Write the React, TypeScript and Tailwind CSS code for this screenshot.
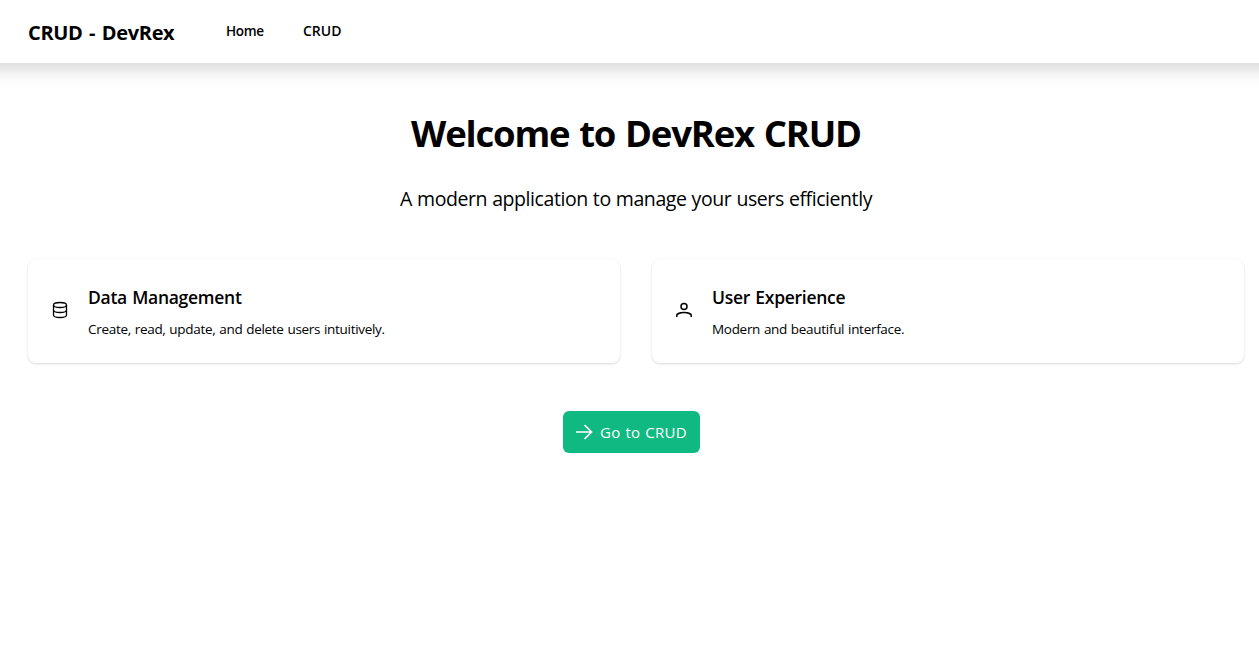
import React from "react";

type CardProps = { icon: React.ReactNode; title: string; text: string; textClass: string };

function DatabaseIcon() {
  return (
    <svg className="h-6 w-6" viewBox="0 0 24 24" fill="none" stroke="currentColor" strokeWidth="1.3">
      <ellipse cx="12" cy="7" rx="6.5" ry="2.5" />
      <path d="M5.5 7v10c0 1.4 2.9 2.5 6.5 2.5s6.5-1.1 6.5-2.5V7M5.5 12c0 1.4 2.9 2.5 6.5 2.5s6.5-1.1 6.5-2.5" />
    </svg>
  );
}

function UserIcon() {
  return (
    <svg className="h-6 w-6" viewBox="0 0 24 24" fill="none" stroke="currentColor" strokeWidth="1.5">
      <circle cx="12" cy="8.5" r="3" />
      <path d="M4.75 19v-1.5c0-1.6 3.2-2.9 7.25-2.9s7.25 1.3 7.25 2.9V19" />
    </svg>
  );
}

function Card({ icon, title, text, textClass }: CardProps) {
  return (
    <section className="flex h-[104px] flex-1 items-center rounded-lg bg-white pl-5 shadow-[0_1px_3px_rgba(0,0,0,0.1),0_1px_2px_rgba(0,0,0,0.06)]">
      <div className="mr-4 shrink-0 pb-0.5">{icon}</div>
      <div className="pt-1">
        <h2 className="flex h-7 items-center"><span className="text-[17.5px] font-semibold tracking-[-0.28px] [word-spacing:1px]">{title}</span></h2>
        <p className="mt-[3px] mb-px flex h-7 items-center pt-[3px]"><span className={textClass}>{text}</span></p>
      </div>
    </section>
  );
}

export default function App() {
  return (
    <div className="min-h-[660px] overflow-hidden bg-white font-['Open_Sans','Noto_Sans',sans-serif] whitespace-nowrap text-black">
      <header className="-mx-8 flex h-[63px] items-start pl-15 shadow-[0_4px_20px_rgba(0,0,0,0.2)]">
        <div className="flex h-16 w-[198px] items-center pt-0.5">
          <span className="text-[20px] font-bold tracking-[-0.35px] [word-spacing:1.8px]">CRUD - DevRex</span>
        </div>
        <nav className="flex h-[61px] items-baseline pt-[21px] text-[14px] leading-5 font-semibold">
          <a href="#" className="w-[77px] text-[13.5px] tracking-[-0.35px]">Home</a>
          <a href="#">CRUD</a>
        </nav>
      </header>
      <main className="pr-[15px] pl-7">
        <h1 className="mt-[45px] flex h-[50px] items-center justify-center text-[36.5px] font-bold tracking-[-1.2px] [word-spacing:1.5px]"><span>Welcome to DevRex CRUD</span></h1>
        <p className="mt-[26px] flex h-[30px] items-center justify-center text-[19.5px] tracking-[-0.43px] [word-spacing:0.5px]"><span>A modern application to manage your users efficiently</span></p>
        <div className="mt-[45px] flex gap-8">
          <Card icon={<DatabaseIcon />} title="Data Management" text="Create, read, update, and delete users intuitively." textClass="text-[13.5px] tracking-[-0.3px] [word-spacing:0.6px]" />
          <Card icon={<UserIcon />} title="User Experience" text="Modern and beautiful interface." textClass="text-[13.5px] tracking-[-0.3px] [word-spacing:0.6px]" />
        </div>
        <div className="mt-12 flex pl-[535px]">
          <button className="flex h-[42px] w-[137px] items-center rounded-md bg-[#10b981] pl-3 text-[15px] font-medium tracking-[0.3px] [word-spacing:0.7px] text-white">
            <svg className="mr-[7px] h-[18px] w-[18px]" viewBox="0 0 18 18" fill="none" stroke="currentColor" strokeWidth="1.7">
              <path d="M1 9h16M9.5 2l7 7-7 7" />
            </svg>
            <span>Go to CRUD</span>
          </button>
        </div>
      </main>
    </div>
  );
}
